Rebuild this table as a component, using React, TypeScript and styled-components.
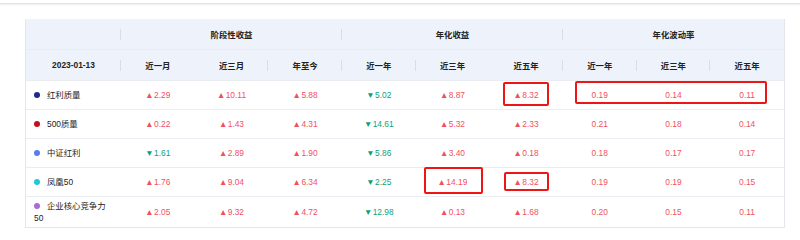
import React from "react";
import styled, { createGlobalStyle } from "styled-components";

const GlobalStyle = createGlobalStyle`
  html, body {
    margin: 0;
    padding: 0;
    background: #ffffff;
  }
  body {
    font-family: "Liberation Sans", "Noto Sans CJK SC", sans-serif;
  }
`;

const colors = {
  red: "#f2505f",
  green: "#0f9f78",
  headerBg: "#eef3fb",
  line: "#e9ecf1",
  divider: "#d9dee6",
  text: "#222",
  mark: "#ee1515",
};

interface Row {
  name: string;
  dot: string;
  values: string[];
}

const rows: Row[] = [
  { name: "红利质量", dot: "#1b2a8c", values: ["▲2.29", "▲10.11", "▲5.88", "▼5.02", "▲8.87", "▲8.32", "0.19", "0.14", "0.11"] },
  { name: "500质量", dot: "#c4101e", values: ["▲0.22", "▲1.43", "▲4.31", "▼14.61", "▲5.32", "▲2.33", "0.21", "0.18", "0.14"] },
  { name: "中证红利", dot: "#5b7cf0", values: ["▼1.61", "▲2.89", "▲1.90", "▼5.86", "▲3.40", "▲0.18", "0.18", "0.17", "0.17"] },
  { name: "凤凰50", dot: "#1ccbd8", values: ["▲1.76", "▲9.04", "▲6.34", "▼2.25", "▲14.19", "▲8.32", "0.19", "0.19", "0.15"] },
  { name: "企业核心竞争力50", dot: "#a96bd6", values: ["▲2.05", "▲9.32", "▲4.72", "▼12.98", "▲0.13", "▲1.68", "0.20", "0.15", "0.11"] },
];

const subHeads = ["近一月", "近三月", "年至今", "近一年", "近三年", "近五年", "近一年", "近三年", "近五年"];
// which sub-header cells show the little separator on their right
const subDividers = [false, true, true, true, false, true, true, true, false];

const marks = [
  { left: 477, top: 63, width: 46, height: 24 },
  { left: 549, top: 62, width: 192, height: 23 },
  { left: 398, top: 148, width: 59, height: 27 },
  { left: 478, top: 153, width: 45, height: 19 },
];

const TopBar = styled.div`
  height: 3px;
  border-bottom: 1px solid #e4e4e4;
  box-shadow: 0 1px 2px rgba(0, 0, 0, 0.08);
`;

const Page = styled.div`
  padding: 15px 15px 0 25px;
`;

const TableWrap = styled.div`
  position: relative;
  width: 760px;
  border: 1px solid #e3e6eb;
  border-top: none;
  box-sizing: border-box;
`;

const Table = styled.table`
  width: 100%;
  table-layout: fixed;
  border-collapse: collapse;
  font-size: 8.4px;
  color: ${colors.text};
`;

const HeadCell = styled.th<{ $divider?: boolean }>`
  position: relative;
  height: 30px;
  padding: 0;
  background: ${colors.headerBg};
  font-weight: 700;
  text-align: center;
  border-bottom: 1px solid ${colors.line};

  &::after {
    content: "";
    display: ${(p) => (p.$divider ? "block" : "none")};
    position: absolute;
    right: 0;
    top: 50%;
    width: 1px;
    height: 11px;
    margin-top: -5px;
    background: ${colors.divider};
  }
`;

const BodyRow = styled.tr`
  height: 29px;
  border-bottom: 1px solid ${colors.line};

  &:last-child {
    border-bottom: none;
  }
`;

const NameCell = styled.td`
  padding: 3px 8px;
  line-height: 12px;
  color: #222;
`;

const Dot = styled.span<{ $color: string }>`
  display: inline-block;
  width: 6px;
  height: 6px;
  border-radius: 50%;
  margin-right: 7px;
  vertical-align: 0;
  background: ${(p) => p.$color};
`;

const ValueCell = styled.td<{ $tone: "up" | "down" }>`
  padding: 0;
  text-align: center;
  color: ${(p) => (p.$tone === "down" ? colors.green : colors.red)};
`;

const Arrow = styled.span`
  font-size: 8.4px;
  margin-right: 0.5px;
`;

const Mark = styled.div`
  position: absolute;
  border: 2px solid ${colors.mark};
  border-radius: 2px;
  box-sizing: border-box;
`;

function Value({ v }: { v: string }) {
  const arrow = v[0] === "▲" || v[0] === "▼" ? v[0] : "";
  const num = arrow ? v.slice(1) : v;
  return (
    <ValueCell $tone={arrow === "▼" ? "down" : "up"}>
      {arrow && <Arrow>{arrow}</Arrow>}
      {num}
    </ValueCell>
  );
}

export default function App() {
  return (
    <>
      <GlobalStyle />
      <TopBar />
      <Page>
        <TableWrap>
          <Table>
            <colgroup>
              <col style={{ width: 95 }} />
              {subHeads.map((_, i) => (
                <col key={i} />
              ))}
            </colgroup>
            <thead>
              <tr>
                <HeadCell $divider />
                <HeadCell colSpan={3} $divider>阶段性收益</HeadCell>
                <HeadCell colSpan={3} $divider>年化收益</HeadCell>
                <HeadCell colSpan={3}>年化波动率</HeadCell>
              </tr>
              <tr>
                <HeadCell $divider>2023-01-13</HeadCell>
                {subHeads.map((h, i) => (
                  <HeadCell key={i} $divider={subDividers[i]}>
                    {h}
                  </HeadCell>
                ))}
              </tr>
            </thead>
            <tbody>
              {rows.map((r) => (
                <BodyRow key={r.name}>
                  <NameCell>
                    <Dot $color={r.dot} />
                    {r.name}
                  </NameCell>
                  {r.values.map((v, i) => (
                    <Value key={i} v={v} />
                  ))}
                </BodyRow>
              ))}
            </tbody>
          </Table>
          {marks.map((m, i) => (
            <Mark key={i} style={m} />
          ))}
        </TableWrap>
      </Page>
    </>
  );
}
